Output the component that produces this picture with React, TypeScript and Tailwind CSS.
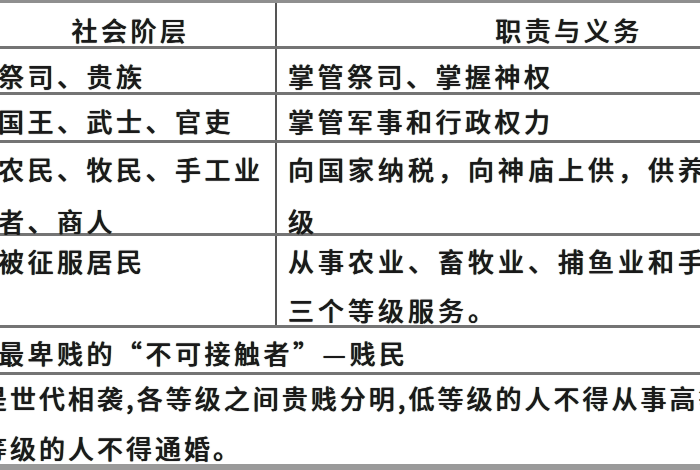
export default function App() {
  return (
    <div className="w-[700px] h-[470px] overflow-hidden bg-white text-[26px] font-medium tracking-[3.5px] text-[#1a1a1a] [text-shadow:0_0_0.8px_#000000] font-['Noto_Sans_CJK_SC','Noto_Sans_CJK_JP',sans-serif]">
      <div className="h-[3px] bg-[#8f8f8f]" />
      <div className="ml-[-14px] w-[875px]">
        {/* header */}
        <div className="flex h-[46px] border-b-[3px] border-[#747474]">
          <div className="w-[289px] shrink-0 text-center leading-[50px] pt-[2px]">社会阶层</div>
          <div className="w-[586px] shrink-0 border-l-2 border-[#555555] text-center leading-[50px] pt-[2px]">职责与义务</div>
        </div>
        {/* row 1 */}
        <div className="flex h-[46px] border-b-[3px] border-[#747474]">
          <div className="w-[289px] shrink-0 pl-[12px] leading-[50px] pt-[2px] whitespace-nowrap">祭司、贵族</div>
          <div className="w-[586px] shrink-0 border-l-2 border-[#555555] pl-[11px] leading-[50px] pt-[2px] whitespace-nowrap">掌管祭司、掌握神权</div>
        </div>
        {/* row 2 */}
        <div className="flex h-[48px] border-b-[3px] border-[#747474]">
          <div className="w-[289px] shrink-0 pl-[12px] leading-[50px] pt-[1px] whitespace-nowrap">国王、武士、官吏</div>
          <div className="w-[586px] shrink-0 border-l-2 border-[#555555] pl-[11px] leading-[50px] pt-[1px] whitespace-nowrap">掌管军事和行政权力</div>
        </div>
        {/* row 3 */}
        <div className="flex h-[93px] border-b-[3px] border-[#747474]">
          <div className="w-[289px] shrink-0 pl-[12px] leading-[52px] whitespace-nowrap">
            <div>农民、牧民、手工业</div>
            <div>者、商人</div>
          </div>
          <div className="w-[586px] shrink-0 border-l-2 border-[#555555] pl-[11px] leading-[52px] whitespace-nowrap tracking-[4px]">
            <div>向国家纳税，向神庙上供，供养前三个等</div>
            <div>级</div>
          </div>
        </div>
        {/* row 4 */}
        <div className="flex h-[92px] border-b-[3px] border-[#747474]">
          <div className="w-[289px] shrink-0 pl-[12px] leading-[49px] whitespace-nowrap">被征服居民</div>
          <div className="w-[586px] shrink-0 border-l-2 border-[#555555] pl-[11px] leading-[49px] whitespace-nowrap tracking-[4px]">
            <div>从事农业、畜牧业、捕鱼业和手工业，为前</div>
            <div>三个等级服务。</div>
          </div>
        </div>
        {/* row 5 */}
        <div className="h-[47px] border-b-[3px] border-[#747474] pl-[12px] leading-[50px] whitespace-nowrap">
          最卑贱的“不可接触者”—贱民
        </div>
        {/* row 6 */}
        <div className="h-[89px] leading-[50px] whitespace-nowrap ml-[-5px] mt-[-2px] tracking-[3px]">
          <div>是世代相袭,各等级之间贵贱分明,低等级的人不得从事高等级的职业,不同</div>
          <div>等级的人不得通婚。</div>
        </div>
      </div>
      <div className="h-[6px] mt-[2px] bg-[#9a9a9a]" />
    </div>
  );
}
